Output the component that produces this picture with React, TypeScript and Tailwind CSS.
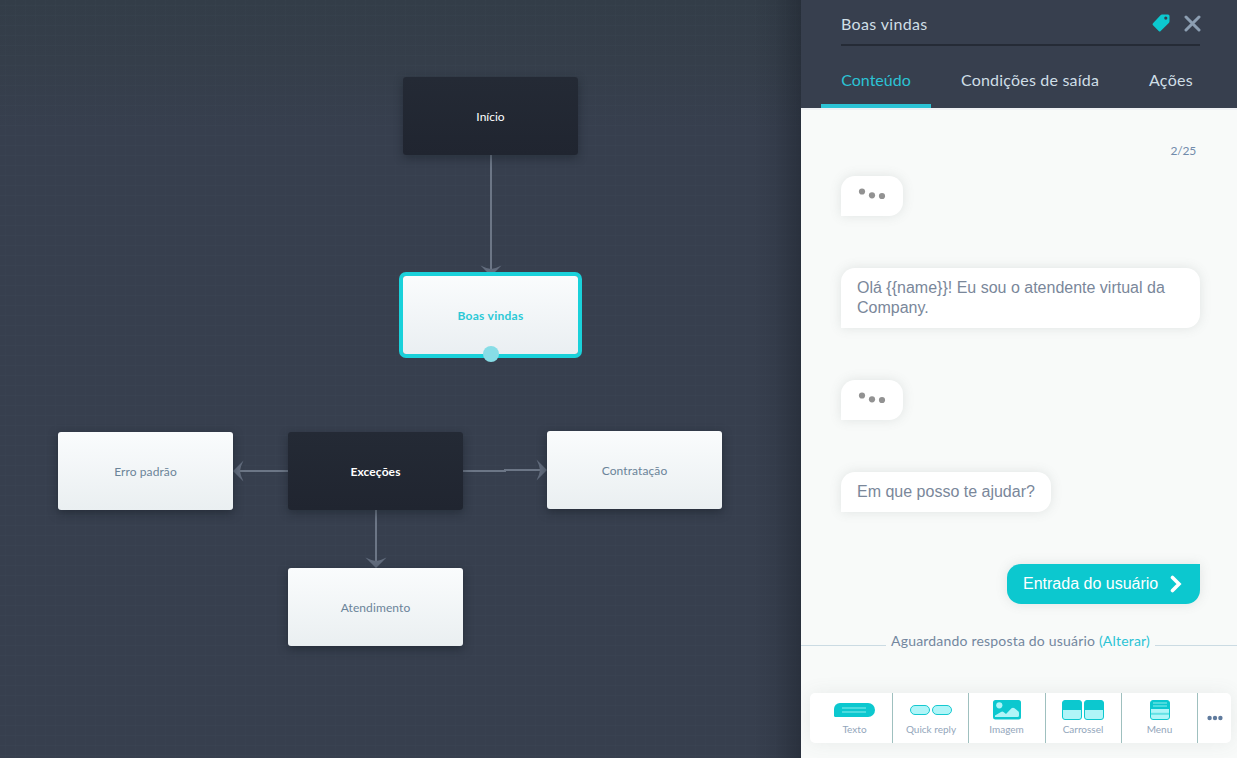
type NodeKind = 'dark' | 'light' | 'selected';

const nodeStyles: Record<NodeKind, string> = {
  dark: 'bg-linear-to-b from-[#242a35] to-[#202530] text-white shadow-[0_3px_10px_rgba(20,28,36,0.45)]',
  light:
    'bg-linear-to-b from-[#fafcfd] to-[#eaeff1] tracking-[0.1px] text-[#6b8499] shadow-[0_3px_10px_rgba(20,28,36,0.5)]',
  selected:
    'bg-linear-to-b from-[#fafcfd] to-[#eaeff2] font-bold tracking-[0.27px] text-[#2cc9d6] shadow-[0_0_0_4px_#1ad1da]',
};

function FlowNode({ kind, place, label }: { kind: NodeKind; place: string; label: string }) {
  return (
    <div
      className={`absolute flex h-[78px] w-[175px] items-center justify-center rounded-[3px] pt-0.5 text-xs ${nodeStyles[kind]} ${place}`}
    >
      {label}
    </div>
  );
}

const arrowHead = 'M0 0 L-10.5 -10.5 Q-5 -7.6 0 -7 Q5 -7.6 10.5 -10.5 Z';

function Connectors() {
  return (
    <svg className="absolute inset-0" width="801" height="758" fill="none">
      <g stroke="#6c7686" strokeWidth="2">
        <path d="M491 154V270" />
        <path d="M376 509V562" />
        <path d="M289 471H240" />
        <path d="M462 471H505V470H541" />
      </g>
      <g fill="#626c7d">
        <path d={arrowHead} transform="translate(491 276)" />
        <path d={arrowHead} transform="translate(376 568)" />
        <path d={arrowHead} transform="translate(233 471) rotate(90)" />
        <path d={arrowHead} transform="translate(547 470) rotate(-90)" />
      </g>
    </svg>
  );
}

function Canvas() {
  return (
    <main className="relative w-[801px] shrink-0 overflow-hidden bg-[#373f4f] bg-[repeating-linear-gradient(180deg,transparent_0px,transparent_5px,rgba(90,115,130,0.06)_5px,rgba(90,115,130,0.06)_6px,transparent_6px,transparent_10px),repeating-linear-gradient(90deg,transparent_0px,transparent_5px,rgba(90,115,130,0.03)_5px,rgba(90,115,130,0.03)_6px,transparent_6px,transparent_10px),linear-gradient(180deg,#333d48_0px,#353e4a_60px,#373f4e_130px)]">
      <Connectors />
      <FlowNode kind="dark" place="left-[403px] top-[77px]" label="Início" />
      <FlowNode kind="selected" place="left-[403px] top-[276px]" label="Boas vindas" />
      <span className="absolute left-[483px] top-[346px] size-4 rounded-full bg-[#87dde6]" />
      <FlowNode kind="light" place="left-[58px] top-[432px]" label="Erro padrão" />
      <FlowNode kind="dark" place="left-[288px] top-[432px] font-bold tracking-[0.1px]" label="Exceções" />
      <FlowNode kind="light" place="left-[547px] top-[431px]" label="Contratação" />
      <FlowNode kind="light" place="left-[288px] top-[568px]" label="Atendimento" />
      <div className="absolute inset-y-0 right-0 w-12 bg-[linear-gradient(90deg,transparent_0%,rgba(28,34,44,0.12)_45%,rgba(28,34,44,0.5)_100%)]" />
    </main>
  );
}

function Header() {
  return (
    <header className="h-[108px] bg-[#373f4e] text-base text-[#cfdee6]">
      <div className="ml-10 mr-[37px] flex h-[46px] items-center border-b-2 border-[#252b36] pt-1">
        <span className="flex-1 tracking-[0.35px]">Boas vindas</span>
        <svg className="mb-0.5 mr-[14px]" width="18" height="18" viewBox="0 0 18 18">
          <path
            fill="#0cc8cf"
            fillRule="evenodd"
            d="M10 .5H16Q17.5 .5 17.5 2V7.2Q17.5 8.2 16.8 8.9L8.7 17Q7.7 18 6.7 17L1 11.3Q0 10.3 1 9.3L8.5 1.2Q9.2 .5 10 .5ZM13.8 2.5A1.6 1.6 0 1 0 13.8 5.7A1.6 1.6 0 1 0 13.8 2.5Z"
          />
        </svg>
        <svg className="-mr-px mb-0.5" width="17" height="17" viewBox="0 0 17 17">
          <path d="M2 2L15 15M15 2L2 15" stroke="#8c9eb2" strokeWidth="3" strokeLinecap="round" />
        </svg>
      </div>
      <nav className="ml-5 flex h-[62px] gap-2.5">
        <a className="flex w-[110px] items-center justify-center border-b-4 border-[#2cc3d5] pt-2.5 text-[#2cc3d5]">
          Conteúdo
        </a>
        <a className="flex w-[178px] items-center justify-center pt-1.5 tracking-[0.2px]">Condições de saída</a>
        <a className="flex w-[84px] items-center justify-center pt-1.5 tracking-[0.3px]">Ações</a>
      </nav>
    </header>
  );
}

const bubble =
  "rounded-[14px] rounded-bl-none bg-white px-4 py-2.5 font-['Liberation_Sans',Arial,sans-serif] text-base leading-5 text-[#7a879a] shadow-[0_0_12px_rgba(100,110,110,0.16)]";

function Typing() {
  return (
    <div className={`${bubble} h-10 w-[62px]`}>
      <svg className="-mt-2.5" width="30" height="40" fill="#929292">
        <circle cx="5" cy="15.5" r="3.1" />
        <circle cx="15" cy="19.3" r="3.1" />
        <circle cx="25" cy="20" r="3.1" />
      </svg>
    </div>
  );
}

function Conversation() {
  return (
    <section className="flex flex-col items-start gap-[52px] pl-10 pr-[37px]">
      <Typing />
      <div className={`${bubble} w-[359px]`}>{'Olá {{name}}! Eu sou o atendente virtual da Company.'}</div>
      <Typing />
      <div className={`${bubble} w-[210px] whitespace-nowrap`}>Em que posso te ajudar?</div>
      <div className="flex h-10 w-[193px] items-center justify-between self-end rounded-[14px] rounded-tr-none bg-[#0cc8cf] pl-4 pr-[18px] font-['Liberation_Sans',Arial,sans-serif] text-base leading-5 text-white shadow-[0_0_12px_rgba(100,110,110,0.16)]">
        <span className="whitespace-nowrap">Entrada do usuário</span>
        <svg width="12" height="18" viewBox="0 0 12 18" fill="none">
          <path d="M2.5 2.5L9 9L2.5 15.5" stroke="#fff" strokeWidth="3.6" strokeLinecap="round" />
        </svg>
      </div>
    </section>
  );
}

function TextIcon() {
  return (
    <svg width="41" height="20" viewBox="0 0 41 20">
      <path fill="#0cc8cf" d="M6 3H34A7 7 0 0 1 34 17H1.5Q0 17 0 15.5V9A6 6 0 0 1 6 3Z" />
      <path d="M8 8H32M8 12H32" stroke="#62e1e4" strokeWidth="1.6" />
    </svg>
  );
}

function QuickReplyIcon() {
  return (
    <svg width="42" height="20" viewBox="0 0 42 20" fill="#b0f5f8" stroke="#16c9d0">
      <rect x=".5" y="5.5" width="19" height="9" rx="4.5" />
      <rect x="22.5" y="5.5" width="19" height="9" rx="4.5" />
    </svg>
  );
}

function ImageIcon() {
  return (
    <svg width="28" height="20" viewBox="0 0 28 20">
      <rect width="28" height="19.5" rx="2.5" fill="#0cc8cf" />
      <circle cx="6.3" cy="5.3" r="3.1" fill="#b0f5f8" />
      <path
        fill="#b0f5f8"
        d="M2 17V15.5L8 12Q9.3 11.2 10.5 12L13 14L18.5 8.3Q20 7 21.5 8.3L25.5 11.5Q26 12 26 13V15.5Q26 17 24.5 17Z"
      />
    </svg>
  );
}

function CarouselIcon() {
  return (
    <svg width="42" height="20" viewBox="0 0 42 20">
      <g stroke="#0cc8cf" fill="#b0f5f8">
        <rect x=".5" y=".5" width="19" height="19" rx="2.5" />
        <rect x="22.5" y=".5" width="19" height="19" rx="2.5" />
      </g>
      <path fill="#0cc8cf" d="M.5 3Q.5 .5 3 .5H17Q19.5 .5 19.5 3V10H.5ZM22.5 3Q22.5 .5 25 .5H39Q41.5 .5 41.5 3V10H22.5Z" />
    </svg>
  );
}

function MenuIcon() {
  return (
    <svg width="20" height="20" viewBox="0 0 20 20">
      <rect x=".5" y=".5" width="19" height="19" rx="2.5" fill="#b0f5f8" stroke="#0cc8cf" />
      <path fill="#0cc8cf" d="M.5 3Q.5 .5 3 .5H17Q19.5 .5 19.5 3V9H.5Z" />
      <path d="M3 3H17M3 6H17" stroke="#62e1e4" strokeWidth="1.6" />
      <path d="M1 13.8H19" stroke="#62e1e4" strokeWidth="2" />
    </svg>
  );
}

const tools = [
  { label: 'Texto', icon: <TextIcon />, box: 'w-[77px] pl-px' },
  { label: 'Quick reply', icon: <QuickReplyIcon />, box: 'w-[76px] pl-px' },
  { label: 'Imagem', icon: <ImageIcon />, box: 'w-[77px] pr-px' },
  { label: 'Carrossel', icon: <CarouselIcon />, box: 'w-[76px] pr-px' },
  { label: 'Menu', icon: <MenuIcon />, box: 'w-[76px]' },
];

function Toolbar() {
  return (
    <footer className="ml-[9px] flex h-[50px] w-[421px] rounded-[5px] bg-white pl-[6px] shadow-[0_0_18px_rgba(100,110,110,0.1)]">
      {tools.map((tool) => (
        <button
          key={tool.label}
          className={`flex flex-col items-center border-r border-[#9fc0bf] pt-[7px] text-[10px] text-[#93a6bb] ${tool.box}`}
        >
          {tool.icon}
          <span className="whitespace-nowrap leading-[18px]">{tool.label}</span>
        </button>
      ))}
      <button className="flex flex-1 items-center justify-center pl-px">
        <svg width="16" height="6" fill="#607b9e">
          <circle cx="2.6" cy="3" r="2.2" />
          <circle cx="8" cy="3" r="2.2" />
          <circle cx="13.4" cy="3" r="2.2" />
        </svg>
      </button>
    </footer>
  );
}

export default function App() {
  return (
    <div className="flex h-[758px] w-[1237px] overflow-hidden bg-[#373f4e] font-['Lato','Open_Sans',sans-serif]">
      <Canvas />
      <aside className="flex w-[436px] flex-col bg-[#f8faf9]">
        <Header />
        <div className="h-[68px] border-t-2 border-[#eff1f4] pr-[41px] pt-[33px] text-right text-xs leading-4 tracking-[-0.2px] text-[#718bab]">
          2/25
        </div>
        <Conversation />
        <div className="mt-[27px] flex h-[62px] items-start">
          <span className="mt-[14px] h-px w-[85px] bg-[#cbdbe3]" />
          <p className="w-[269px] whitespace-nowrap text-center text-sm leading-5 tracking-[0.19px] text-[#73879f]">
            Aguardando resposta do usuário <a className="text-[#2cc3d5]">(Alterar)</a>
          </p>
          <span className="mt-[14px] h-px flex-1 bg-[#cbdbe3]" />
        </div>
        <Toolbar />
      </aside>
    </div>
  );
}
